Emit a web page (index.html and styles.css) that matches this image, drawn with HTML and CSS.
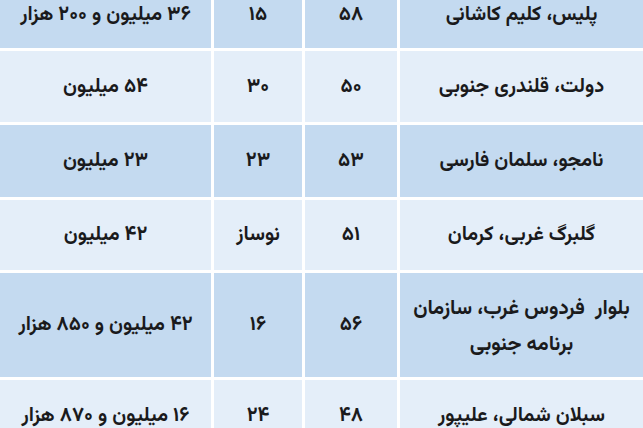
FILE: index.html
```html
<!DOCTYPE html>
<html lang="fa" dir="rtl">
<head>
<meta charset="utf-8">
<link rel="stylesheet" href="styles.css">
</head>
<body>
<div class="table">
  <div class="row dark r1">
    <div class="cell loc">پلیس، کلیم کاشانی</div>
    <div class="cell">۵۸</div>
    <div class="cell">۱۵</div>
    <div class="cell">۳۶ میلیون و ۲۰۰ هزار</div>
  </div>
  <div class="row light">
    <div class="cell loc">دولت، قلندری جنوبی</div>
    <div class="cell">۵۰</div>
    <div class="cell">۳۰</div>
    <div class="cell">۵۴ میلیون</div>
  </div>
  <div class="row dark r3">
    <div class="cell loc">نامجو، سلمان فارسی</div>
    <div class="cell">۵۳</div>
    <div class="cell">۲۳</div>
    <div class="cell">۲۳ میلیون</div>
  </div>
  <div class="row light r4">
    <div class="cell loc">گلبرگ غربی، کرمان</div>
    <div class="cell">۵۱</div>
    <div class="cell">نوساز</div>
    <div class="cell">۴۲ میلیون</div>
  </div>
  <div class="row dark tall">
    <div class="cell loc two">بلوار&nbsp; فردوس غرب، سازمان<br>برنامه جنوبی</div>
    <div class="cell">۵۶</div>
    <div class="cell">۱۶</div>
    <div class="cell">۴۲ میلیون و ۸۵۰ هزار</div>
  </div>
  <div class="row light">
    <div class="cell loc">سبلان شمالی، علیپور</div>
    <div class="cell">۴۸</div>
    <div class="cell">۲۴</div>
    <div class="cell">۱۶ میلیون و ۸۷۰ هزار</div>
  </div>
</div>
</body>
</html>
```

FILE: styles.css
```css
html, body {
  margin: 0;
  padding: 0;
  background: #ffffff;
  width: 643px;
  height: 428px;
  overflow: hidden;
}

.table {
  margin-top: -18px;
  display: flex;
  flex-direction: column;
  gap: 3px;
  font-family: "Vazirmatn", "Noto Sans Arabic", "Noto Naskh Arabic", "DejaVu Sans", sans-serif;
  font-weight: bold;
  font-size: 20px;
  color: #1a1a1c;
}

.row {
  display: grid;
  grid-template-columns: 243px 92px 88px 211px;
  column-gap: 3px;
  height: 71px;
}

.row.r1 { height: 66px; }
.row.r3 { height: 72px; }
.row.r4 { height: 70px; }
.row.tall { height: 104px; }

.cell {
  display: flex;
  align-items: center;
  justify-content: center;
  text-align: center;
  line-height: 30px;
  white-space: nowrap;
}

.cell.two {
  font-size: 20.5px;
  line-height: 36px;
  padding-top: 4px;
}

.dark .cell { background: #c4daf0; }
.light .cell { background: #e4eef9; }
```
